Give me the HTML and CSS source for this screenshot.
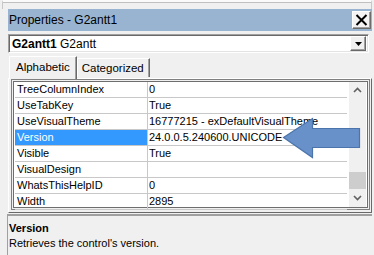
FILE: index.html
```html
<!DOCTYPE html>
<html>
<head>
<meta charset="utf-8">
<link rel="stylesheet" href="styles.css">
</head>
<body>
<div class="win">
  <div class="topframe"></div>
  <div class="titlebar">
    <span class="title">Properties - G2antt1</span>
    <span class="closebtn">
      <svg width="13" height="12" viewBox="0 0 13 12"><path d="M1.5 1 L11.5 11 M11.5 1 L1.5 11" stroke="#000" stroke-width="2"/></svg>
    </span>
  </div>
  <div class="combo">
    <span class="combo-text"><b>G2antt1</b> G2antt</span>
    <span class="dropbtn"><svg width="7" height="4" viewBox="0 0 7 4"><path d="M0 0 H7 L3.5 4 Z" fill="#000"/></svg></span>
  </div>
  <div class="tabs">
    <span class="tab active">Alphabetic</span>
    <span class="tab">Categorized</span>
  </div>
  <div class="tabpage">
    <div class="grid">
      <div class="rows">
        <div class="row"><span class="name">TreeColumnIndex</span><span class="val">0</span></div>
        <div class="row"><span class="name">UseTabKey</span><span class="val">True</span></div>
        <div class="row"><span class="name">UseVisualTheme</span><span class="val">16777215 - exDefaultVisualTheme</span></div>
        <div class="row sel"><span class="name">Version</span><span class="val">24.0.0.5.240600.UNICODE</span></div>
        <div class="row"><span class="name">Visible</span><span class="val">True</span></div>
        <div class="row"><span class="name">VisualDesign</span><span class="val"></span></div>
        <div class="row"><span class="name">WhatsThisHelpID</span><span class="val">0</span></div>
        <div class="row"><span class="name">Width</span><span class="val">2895</span></div>
      </div>
      <div class="scrollbar">
        <svg class="arr" width="9" height="6" viewBox="0 0 9 6"><path d="M1 5 L4.5 1.5 L8 5" stroke="#606060" stroke-width="1.6" fill="none"/></svg>
        <div class="track"><div class="thumb"></div></div>
        <svg class="arr" width="9" height="6" viewBox="0 0 9 6"><path d="M1 1 L4.5 4.5 L8 1" stroke="#606060" stroke-width="1.6" fill="none"/></svg>
      </div>
    </div>
  </div>
  <div class="desc">
    <div class="desc-title">Version</div>
    <div class="desc-text">Retrieves the control's version.</div>
  </div>
  <svg class="bigarrow" width="82" height="44" viewBox="0 0 82 44">
    <path d="M1.5 20.5 L30.5 1.5 L30.5 11.5 L77.5 11.5 L77.5 30.5 L30.5 30.5 L30.5 40.5 Z" fill="#6991c9" stroke="#4a74ab" stroke-width="1.2"/>
  </svg>
</div>
</body>
</html>
```
FILE: styles.css
```css
* { box-sizing: border-box; }
html, body { margin: 0; padding: 0; }
body {
  background: #f0f0f0;
  font-family: "Liberation Sans", Arial, sans-serif;
  font-size: 11px;
  color: #000;
  width: 374px;
  height: 255px;
  overflow: hidden;
}
.win {
  position: relative;
  height: 255px;
  display: flex;
  flex-direction: column;
}
.topframe {
  height: 9px;
  margin: 0 2px 0 2px;
  border-left: 1px solid #c8c8c8;
  border-right: 1px solid #c8c8c8;
  border-top: 2px solid #fafafa;
  position: relative;
}
.topframe::before {
  content: "";
  position: absolute;
  left: 0; right: 0; top: 0;
  height: 1px;
  background: #c0c0c0;
}
.titlebar {
  height: 22px;
  margin: 0 2px 0 8px;
  background: #99b4d1;
  display: flex;
  align-items: center;
  justify-content: space-between;
  padding-left: 1px;
  padding-right: 1px;
}
.title {
  font-size: 12px;
  color: #000;
}
.closebtn {
  width: 19px;
  height: 18px;
  background: #f4f4f4;
  border: 1px solid;
  border-color: #ffffff #6d6d6d #6d6d6d #ffffff;
  box-shadow: inset -1px -1px 0 #a0a0a0;
  display: flex;
  align-items: center;
  justify-content: center;
}
.combo {
  margin: 3px 5px 0 8px;
  height: 19px;
  background: #fff;
  border: 1px solid;
  border-color: #a0a0a0 #ffffff #ffffff #a0a0a0;
  box-shadow: inset 1px 1px 0 #696969, inset -1px -1px 0 #e3e3e3;
  display: flex;
  align-items: center;
  justify-content: space-between;
  padding: 0 2px 0 3px;
  font-size: 12px;
}
.combo-text b { font-weight: bold; }
.dropbtn {
  width: 16px;
  height: 15px;
  background: #f0f0f0;
  border: 1px solid;
  border-color: #ffffff #696969 #696969 #ffffff;
  box-shadow: inset -1px -1px 0 #a0a0a0;
  display: flex;
  align-items: center;
  justify-content: center;
  padding-top: 1px;
}
.tabs {
  margin: 3px 0 0 9px;
  height: 22px;
  display: flex;
  align-items: flex-end;
  position: relative;
  z-index: 1;
}
.tab {
  height: 19px;
  padding: 0 5px 0 4px;
  line-height: 18px;
  font-size: 11.5px;
  border: 1px solid;
  border-bottom: none;
  border-color: #ffffff #696969 #ffffff #ffffff;
  box-shadow: inset -1px 0 0 #a0a0a0;
  background: #f0f0f0;
  margin-bottom: 1px;
}
.tab.active {
  height: 23px;
  padding: 0 6px 0 6px;
  line-height: 20px;
  margin-bottom: -1px;
  margin-right: 0;
}
.tabpage {
  margin: 0 2px 0 8px;
  height: 135px;
  border: 1px solid;
  border-color: #ffffff #696969 #696969 #ffffff;
  padding: 0 1px 2px 2px;
}
.grid {
  height: 100%;
  border: 1px solid #808080;
  box-shadow: inset 0 0 0 1px #f0f0f0, inset 0 0 0 2px #6e6e6e;
  padding: 2px 3px 2px 3px;
  display: flex;
  background: #fff;
}
.rows {
  flex: 1;
  display: flex;
  flex-direction: column;
}
.row {
  height: 16px;
  display: flex;
}
.name {
  width: 133px;
  padding-left: 2px;
  line-height: 15px;
  border-bottom: 1px solid #c8c8c8;
  border-right: 1px solid #c8c8c8;
  white-space: nowrap;
  overflow: hidden;
}
.val {
  flex: 1;
  padding-left: 1px;
  line-height: 15px;
  border-bottom: 1px solid #c8c8c8;
  white-space: nowrap;
  overflow: hidden;
}
.row.sel .name {
  background: #3399ff;
  color: #fff;
}
.scrollbar {
  width: 17px;
  margin-left: 2px;
  background: #f0f0f0;
  display: flex;
  flex-direction: column;
  align-items: center;
  padding: 5px 0 6px 0;
}
.scrollbar .arr { flex: none; }
.track {
  flex: 1;
  width: 100%;
  position: relative;
}
.thumb {
  position: absolute;
  left: 0;
  right: 0;
  bottom: 6px;
  height: 17px;
  background: #cdcdcd;
}
.desc {
  margin: 1px 2px 0 7px;
  flex: 1;
  border-top: 2px solid #a0a0a0;
  border-left: 1px solid #a0a0a0;
  padding: 5px 0 0 1px;
}
.desc-title {
  font-weight: bold;
  font-size: 11px;
  line-height: 14px;
}
.desc-text {
  font-size: 11px;
  line-height: 14px;
  margin-top: 1px;
}
.bigarrow {
  position: absolute;
  left: 282px;
  top: 117px;
}
```
